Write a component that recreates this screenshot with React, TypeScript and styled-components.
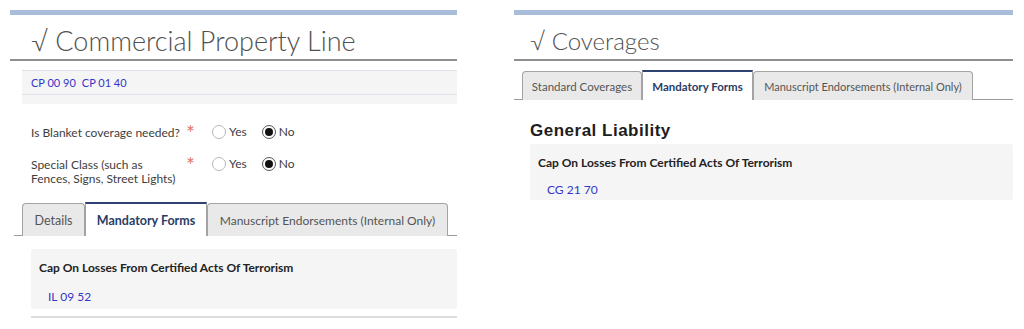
import React from "react";
import styled, { createGlobalStyle, css } from "styled-components";

const Global = createGlobalStyle`
  html, body { margin: 0; padding: 0; background: #fff; }
  body { font-family: "Lato", "Open Sans", sans-serif; color: #333; }
  * { box-sizing: border-box; }
`;

const Page = styled.div`
  display: flex;
  align-items: flex-start;
  gap: 57px;
  padding: 10px 11px 0 10px;
  width: 1024px;
  height: 329px;
  overflow: hidden;
`;

const Panel = styled.section<{ $w: number }>`
  width: ${(p) => p.$w}px;
  flex: none;
  display: flex;
  flex-direction: column;
`;

const TopBar = styled.div`
  height: 5px;
  background: #a9bcd9;
`;

const Title = styled.h1<{ $fs: number; $pl: number }>`
  margin: 0;
  padding: 9px 0 0 ${(p) => p.$pl}px;
  height: 46px;
  font-family: "Lato", sans-serif;
  font-weight: 300;
  font-size: ${(p) => p.$fs}px;
  line-height: 34px;
  color: #505050;
  white-space: nowrap;
  border-bottom: 2px solid #8f8f8f;
`;

const LinkBox = styled.div`
  margin: 9px 0 0 12px;
  background: #f5f5f5;
  border-top: 1px solid #dfe4ea;
  padding-bottom: 9px;
`;

const LinkRow = styled.div`
  display: flex;
  gap: 6px;
  height: 24px;
  align-items: center;
  padding-left: 9px;
  border-bottom: 1px solid #dfe4ea;
`;

const FormLink = styled.a`
  font-family: "Lato", sans-serif;
  font-size: 11px;
  color: #3535c8;
  text-decoration: none;
`;

const Form = styled.div`
  display: flex;
  flex-direction: column;
  gap: 16px;
  padding: 21px 0 0 21px;
`;

const Row = styled.div`
  display: grid;
  grid-template-columns: 155px 26px auto;
  align-items: start;
  font-family: "Lato", sans-serif;
  font-size: 12px;
  line-height: 14px;
  color: #3e3e3e;
`;

const Label = styled.div`
  padding-top: 1px;
`;

const Star = styled.span`
  color: #e07a6a;
  font-size: 21px;
  line-height: 16px;
`;

const Radios = styled.div`
  display: flex;
  gap: 15px;
`;

const RadioOpt = styled.label`
  display: flex;
  align-items: center;
  gap: 3px;
`;

const Circle = styled.span<{ $on?: boolean }>`
  width: 14px;
  height: 14px;
  border-radius: 50%;
  border: 1px solid #b8b8b8;
  background: #fff;
  display: inline-flex;
  align-items: center;
  justify-content: center;
  ${(p) =>
    p.$on &&
    css`
      border-color: #555;
      &::after {
        content: "";
        width: 8px;
        height: 8px;
        border-radius: 50%;
        background: #111;
      }
    `}
`;

const TabBar = styled.div<{ $left: number; $top: number }>`
  display: flex;
  align-items: flex-end;
  margin: ${(p) => p.$top}px 0 0 ${(p) => p.$left}px;
  padding-left: 8px;
  border-bottom: 1px solid #9a9a9a;
`;

const Tab = styled.div<{ $active?: boolean; $h: number; $fs: number; $w: number }>`
  width: ${(p) => p.$w}px;
  height: ${(p) => p.$h}px;
  display: flex;
  align-items: center;
  justify-content: center;
  white-space: nowrap;
  font-family: "Lato", sans-serif;
  font-size: ${(p) => p.$fs}px;
  color: #555;
  background: #e9e9e9;
  border: 1px solid #a3a3a3;
  border-bottom: none;
  border-radius: 4px 4px 0 0;
  margin-bottom: -1px;
  ${(p) =>
    p.$active &&
    css`
      background: #fff;
      color: #2b3d66;
      font-weight: 700;
      border-top: 2px solid #2f4170;
      border-radius: 0;
      height: ${p.$h + 1}px;
    `}
`;

const Card = styled.div<{ $left: number; $top: number; $h: number }>`
  margin: ${(p) => p.$top}px 0 0 ${(p) => p.$left}px;
  height: ${(p) => p.$h}px;
  background: #f5f5f5;
  padding: 10px 0 0 8px;
  display: flex;
  flex-direction: column;
  border-radius: 2px;
`;

const CardTitle = styled.div`
  font-family: "Lato", sans-serif;
  font-weight: 700;
  font-size: 12px;
  line-height: 18px;
  color: #222;
`;

const CardLink = styled(FormLink)<{ $gap: number }>`
  font-size: 12px;
  margin: ${(p) => p.$gap}px 0 0 9px;
`;

const Rule = styled.div`
  margin: 7px 0 0 21px;
  height: 2px;
  background: #ddd;
`;

const Section = styled.h2`
  margin: 21px 0 0 16px;
  font-family: "Liberation Sans", Arial, sans-serif;
  font-weight: 700;
  font-size: 17px;
  letter-spacing: 0.5px;
  line-height: 20px;
  color: #1d1d1d;
`;

function Radio({ on, label }: { on?: boolean; label: string }) {
  return (
    <RadioOpt>
      <Circle $on={on} />
      {label}
    </RadioOpt>
  );
}

export default function App() {
  return (
    <>
      <Global />
      <Page>
        <Panel $w={447}>
          <TopBar />
          <Title $fs={27} $pl={21}>√ Commercial Property Line</Title>
          <LinkBox>
            <LinkRow>
              <FormLink href="#">CP 00 90</FormLink>
              <FormLink href="#">CP 01 40</FormLink>
            </LinkRow>
          </LinkBox>
          <Form>
            <Row>
              <Label>Is Blanket coverage needed?</Label>
              <Star>*</Star>
              <Radios>
                <Radio label="Yes" />
                <Radio on label="No" />
              </Radios>
            </Row>
            <Row>
              <Label>
                Special Class (such as
                <br />
                Fences, Signs, Street Lights)
              </Label>
              <Star>*</Star>
              <Radios>
                <Radio label="Yes" />
                <Radio on label="No" />
              </Radios>
            </Row>
          </Form>
          <TabBar $left={4} $top={16}>
            <Tab $h={33} $fs={12.5} $w={63}>Details</Tab>
            <Tab $h={33} $fs={12.5} $w={122} $active>Mandatory Forms</Tab>
            <Tab $h={33} $fs={12} $w={241}>Manuscript Endorsements (Internal Only)</Tab>
          </TabBar>
          <Card $left={21} $top={13} $h={60}>
            <CardTitle>Cap On Losses From Certified Acts Of Terrorism</CardTitle>
            <CardLink $gap={12} href="#">IL 09 52</CardLink>
          </Card>
          <Rule />
        </Panel>
        <Panel $w={499}>
          <TopBar />
          <Title $fs={24} $pl={16}>√ Coverages</Title>
          <TabBar $left={0} $top={9}>
            <Tab $h={29} $fs={11.5} $w={120}>Standard Coverages</Tab>
            <Tab $h={29} $fs={11.5} $w={111} $active>Mandatory Forms</Tab>
            <Tab $h={29} $fs={11} $w={220}>Manuscript Endorsements (Internal Only)</Tab>
          </TabBar>
          <Section>General Liability</Section>
          <Card $left={16} $top={3} $h={56}>
            <CardTitle>Cap On Losses From Certified Acts Of Terrorism</CardTitle>
            <CardLink $gap={10} href="#">CG 21 70</CardLink>
          </Card>
        </Panel>
      </Page>
    </>
  );
}
